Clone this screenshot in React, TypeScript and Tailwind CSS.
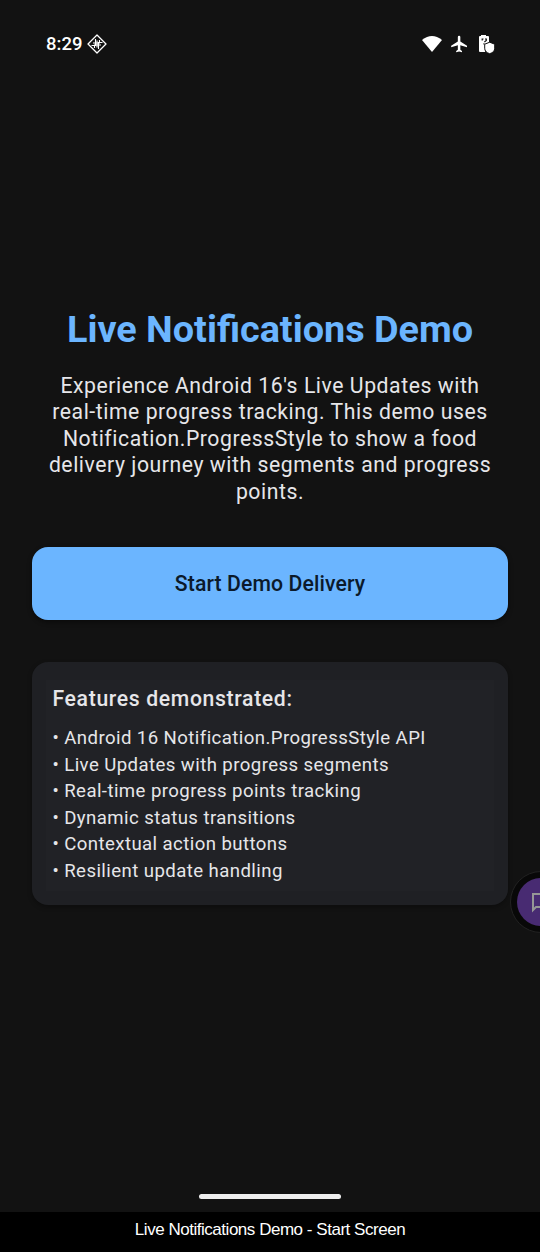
export default function App() {
  const features = ['Android 16 Notification.ProgressStyle API','Live Updates with progress segments','Real-time progress points tracking','Dynamic status transitions','Contextual action buttons','Resilient update handling'];
  return (
    <div className="relative flex h-[1252px] w-[540px] flex-col overflow-hidden bg-[#121212] font-['Roboto',sans-serif] text-[#e6e6e9]">
      <header className="flex h-[88px] shrink-0 items-center justify-between pr-[45px] pl-[46px] text-white">
        <div className="flex items-center gap-[4.5px]">
          <span className="text-[18.5px] leading-[24px] font-medium">8:29</span>
          <svg width="20" height="20" viewBox="0 0 20 20" fill="none" stroke="currentColor"><path strokeWidth="1.3" strokeLinejoin="round" d="M10 1 19 10 10 19 1 10Z" /><path strokeWidth="1.1" d="M8.5 5v6.5H4.5M11.5 15V8.5h4M12.5 6v3H6M7.5 14v-3H14M10 6.5v7" /></svg>
        </div>
        <div className="flex items-center">
          <svg className="mr-[8px]" width="20" height="16" viewBox="0 0 20 16" fill="currentColor"><path d="M10 16 0 4Q10-4 20 4Z" /></svg>
          <svg className="mr-[9px]" width="19" height="20" viewBox="1 0 22 24" fill="currentColor"><path d="M21 16v-2l-8-5V3.5a1.5 1.5 0 0 0-3 0V9l-8 5v2l8-2.5V19l-2 1.5V22l3.5-1 3.5 1v-1.5L13 19v-5.5z" /></svg>
          <svg width="17" height="20" viewBox="0 0 17 20"><path fill="#fff" d="M1 3q0-1 1-1h1V1h5v1h2q1 0 1 1v6l-4 2v7H2q-1 0-1-1Z" /><path d="M4.2 6.5V5h1.3M7 5h1.3v1.5L6.4 8M6 9.2v1.3" fill="none" stroke="#121212" strokeWidth="1.2" /><path fill="#fff" stroke="#121212" d="m11.7 8.2 5 2v4q0 4-5 5.5-5-1.5-5-5.5v-4z" /></svg>
        </div>
      </header>
      <main className="flex flex-col px-[32px] pt-[218.5px]">
        <h1 className="text-center text-[37.8px] leading-[44px] font-bold whitespace-nowrap text-[#6bb5ff]">Live Notifications Demo</h1>
        <p className="mt-[22px] text-center text-[21.2px] leading-[26.5px] tracking-[0.55px] whitespace-nowrap">Experience Android 16's Live Updates with<br />real-time progress tracking. This demo uses<br />Notification.ProgressStyle to show a food<br />delivery journey with segments and progress<br />points.</p>
        <button className="mt-[41.5px] h-[73px] rounded-[16px] bg-[#6bb5ff] pt-[2px] text-[21.2px] font-medium tracking-[0.11px] text-[#0b1a2b] shadow-[0_2px_5px_rgba(0,0,0,0.45)]">Start Demo Delivery</button>
        <section className="mt-[42px] h-[243px] rounded-[16px] bg-[#1f2024] p-[14px] pt-[18px] shadow-[0_2px_5px_rgba(0,0,0,0.3)]">
          <div className="h-full bg-[#212226] px-[6.5px] pt-[5px]">
            <h2 className="text-[21.2px] leading-[28px] font-medium tracking-[0.65px]">Features demonstrated:</h2>
            <ul className="mt-[12.5px] text-[18.6px] leading-[26.5px] tracking-[0.42px]">
              {features.map((f) => <li key={f}>• {f}</li>)}
            </ul>
          </div>
        </section>
      </main>
      <button aria-label="Chat" className="absolute top-[871px] left-[510px] flex size-[62px] items-center justify-center rounded-full border border-[#222] bg-[#080808]">
        <span className="flex size-[48px] items-center justify-center rounded-full bg-[#482b72]">
          <svg width="24" height="24" viewBox="0 0 24 24" fill="none" stroke="#969696" strokeWidth="2"><path d="M4 4h16v13H7l-3 3Z" /></svg>
        </span>
      </button>
      <footer className="mt-auto flex h-[58px] shrink-0 flex-col items-center">
        <div className="h-[5px] w-[142px] rounded-full bg-[#eee]" />
        <div className="mt-auto flex h-[40px] w-full items-center justify-center bg-black pb-[5px] font-['Liberation_Sans',sans-serif] text-[17px] tracking-[-0.47px] text-white">Live Notifications Demo - Start Screen</div>
      </footer>
    </div>
  );
}
